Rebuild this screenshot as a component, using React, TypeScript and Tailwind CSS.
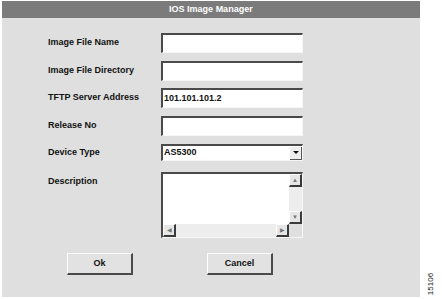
import React from 'react';

const font = { fontFamily: '"Liberation Sans", Arial, sans-serif' };

const Field = ({ label, value, top }: { label: string; value?: string; top: string }) => (
  <div className={`flex items-center h-[20px] ${top}`}>
    <span className="w-[113px] text-[9px] font-bold text-[#111]">{label}</span>
    <div className="w-[142px] h-[20px] bg-white border-t-2 border-l-2 border-[#4a4a4a] border-b border-r border-b-[#f6f6f6] border-r-[#f6f6f6] flex items-center px-[1px] text-[9px] font-bold text-[#111]">
      {value}
    </div>
  </div>
);

const ScrollBtn = ({ children }: { children: React.ReactNode }) => (
  <div className="w-[13px] h-[13px] bg-[#e6e6e6] border-t border-l border-white border-b-2 border-r-2 border-b-[#3a3a3a] border-r-[#3a3a3a] flex items-center justify-center text-[6px] leading-none text-[#777]">
    {children}
  </div>
);

const Button = ({ label }: { label: string }) => (
  <button className="w-[66px] h-[22px] bg-[#e2e2e2] border-t border-l border-white border-b-2 border-r-2 border-b-[#4a4a4a] border-r-[#4a4a4a] text-[9px] font-bold text-[#111]">
    {label}
  </button>
);

export default function App() {
  return (
    <div className="w-[442px] h-[299px] bg-white flex overflow-hidden" style={font}>
      <div className="ml-[2px] mt-[1px] w-[428px] h-[296px] bg-[#dfdfdf] flex flex-col">
        <div className="h-[17px] bg-[#7b7b7b] flex items-center justify-center text-[9px] font-bold text-white">
          IOS Image Manager
        </div>
        <div className="pl-[46px] flex flex-col">
          <Field label="Image File Name" top="mt-[15px]" />
          <Field label="Image File Directory" top="mt-[8px]" />
          <Field label="TFTP Server Address" value="101.101.101.2" top="mt-[7px]" />
          <Field label="Release No" top="mt-[8px]" />
          <div className="flex items-center h-[17px] mt-[8px]">
            <span className="w-[113px] text-[9px] font-bold text-[#111]">Device Type</span>
            <div className="w-[142px] h-[17px] bg-white border-t-2 border-l-2 border-[#4a4a4a] border-b border-r border-b-[#f6f6f6] border-r-[#f6f6f6] flex items-center justify-between pl-[1px] text-[9px] font-bold text-[#111]">
              <span>AS5300</span>
              <div className="w-[12px] h-[13px] bg-[#eeeeee] border-b border-r border-[#555] flex items-center justify-center">
                <div className="w-0 h-0 border-l-[3px] border-r-[3px] border-t-[3px] border-l-transparent border-r-transparent border-t-[#111]" />
              </div>
            </div>
          </div>
          <div className="flex items-start mt-[11px]">
            <span className="w-[113px] text-[9px] font-bold text-[#111] mt-[3px]">Description</span>
            <div className="w-[142px] h-[66px] border-t-2 border-l-2 border-[#4a4a4a] border-b border-r border-b-[#f6f6f6] border-r-[#f6f6f6] flex flex-col">
              <div className="flex flex-1">
                <div className="flex-1 bg-white" />
                <div className="w-[13px] bg-[#ededed] flex flex-col justify-between">
                  <ScrollBtn>▲</ScrollBtn>
                  <ScrollBtn>▼</ScrollBtn>
                </div>
              </div>
              <div className="h-[13px] flex bg-[#ededed]">
                <ScrollBtn>◀</ScrollBtn>
                <div className="flex-1" />
                <ScrollBtn>▶</ScrollBtn>
                <div className="w-[13px] bg-[#dfdfdf]" />
              </div>
            </div>
          </div>
          <div className="flex mt-[15px] pl-[19px] gap-[74px]">
            <Button label="Ok" />
            <Button label="Cancel" />
          </div>
        </div>
      </div>
      <div className="flex-1 flex items-end justify-center">
        <span className="text-[8px] text-[#222] -rotate-90 mb-[9px]">15106</span>
      </div>
    </div>
  );
}
